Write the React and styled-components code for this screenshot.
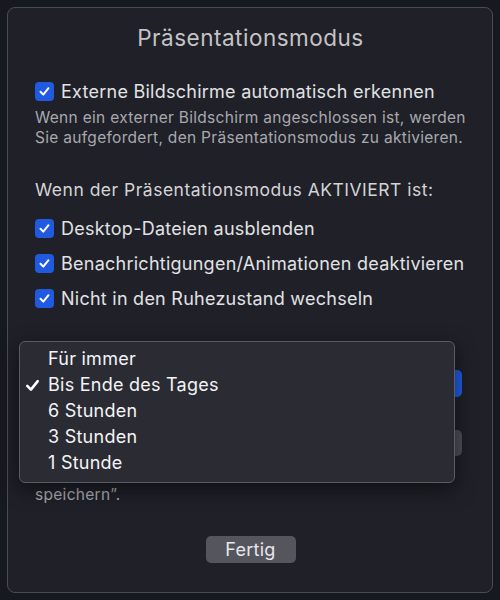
import React from 'react';
import styled, { createGlobalStyle } from 'styled-components';

const GlobalStyle = createGlobalStyle`
	html, body {
		margin: 0;
		padding: 0;
		background: #171920;
	}
	* {
		box-sizing: border-box;
	}
`;

const S = {
	Page: styled.div`
		width: 500px;
		height: 600px;
		padding: 7px;
		background: #171920;
		font-family: Inter, 'Noto Sans', sans-serif;
	`,
	Sheet: styled.div`
		position: relative;
		height: 586px;
		border: 1px solid #4a4c54;
		border-radius: 8px;
		background: #1f2028;
		padding: 17px 26px 0 27px;
		display: flex;
		flex-direction: column;
	`,
	Title: styled.h1`
		margin: 0 0 25px;
		text-align: center;
		font-size: 22.5px;
		line-height: 26px;
		letter-spacing: 0.5px;
		font-weight: 400;
		color: #c4c4c6;
	`,
	Section: styled.div`
		display: flex;
		flex-direction: column;
		margin-bottom: ${(props) => props.gap || 0}px;
	`,
	Row: styled.label`
		display: flex;
		align-items: center;
		gap: 7px;
		height: ${(props) => props.h || 35}px;
		font-size: 18px;
		letter-spacing: 0.25px;
		color: #e2e2e4;
	`,
	Box: styled.span`
		width: 19px;
		height: 19px;
		border-radius: 4px;
		background: #1f5ae0;
		display: flex;
		align-items: center;
		justify-content: center;
		flex-shrink: 0;
	`,
	Note: styled.p`
		margin: ${(props) => props.top || 0}px 0 0;
		font-size: 15.5px;
		line-height: 20px;
		letter-spacing: 0.3px;
		color: #a9a9ad;
		white-space: nowrap;
	`,
	Heading: styled.p`
		margin: 0 0 10px;
		font-size: 17.5px;
		line-height: 22px;
		letter-spacing: 0.5px;
		color: #d4d4d6;
	`,
	Control: styled.div`
		display: flex;
		align-items: center;
		justify-content: flex-end;
		height: ${(props) => props.h}px;
	`,
	Stepper: styled.span`
		width: 16px;
		height: 27px;
		border-radius: 5px;
		background: #1f5ae0;
		margin-right: 4px;
	`,
	GreyButton: styled.span`
		width: 40px;
		height: 26px;
		border-radius: 5px;
		background: #4c4d54;
		margin-right: 4px;
	`,
	Footer: styled.div`
		display: flex;
		justify-content: center;
		margin-top: auto;
		margin-bottom: 29px;
	`,
	Button: styled.button`
		width: 90px;
		height: 27px;
		border: none;
		border-radius: 5px;
		background: #55565d;
		color: #e8e8ea;
		font-family: inherit;
		font-size: 18px;
		letter-spacing: 0.25px;
		padding: 0;
	`,
	Menu: styled.ul`
		position: absolute;
		left: 11px;
		top: 333px;
		width: 436px;
		height: 142px;
		margin: 0;
		padding: 4px 0 0;
		list-style: none;
		border: 1px solid #5a5c63;
		border-radius: 6px;
		background: #2b2c33;
		box-shadow: 0 6px 20px rgba(0, 0, 0, 0.5);
	`,
	Item: styled.li`
		position: relative;
		height: 26px;
		line-height: 26px;
		padding-left: 28px;
		font-size: 18px;
		letter-spacing: 0.25px;
		color: #f4f4f6;
	`,
	Check: styled.span`
		position: absolute;
		left: 4px;
		top: 5px;
		display: flex;
	`
};

const CheckMark = ({ size = 13, weight = 2 }) => (
	<svg width={size} height={size} viewBox="0 0 13 13">
		<path d="M2.5 6.8 L5.3 9.6 L10.5 3.2" fill="none" stroke="#fff" strokeWidth={weight} strokeLinecap="round" strokeLinejoin="round" />
	</svg>
);

const Checkbox = ({ children, h }) => (
	<S.Row h={h}>
		<S.Box>
			<CheckMark />
		</S.Box>
		{children}
	</S.Row>
);

const ACTIVE_ITEMS = [
	'Desktop-Dateien ausblenden',
	'Benachrichtigungen/Animationen deaktivieren',
	'Nicht in den Ruhezustand wechseln'
];

const MENU_ITEMS = [ 'Für immer', 'Bis Ende des Tages', '6 Stunden', '3 Stunden', '1 Stunde' ];

const App = () => (
	<S.Page>
		<GlobalStyle />
		<S.Sheet>
			<S.Title>Präsentationsmodus</S.Title>
			<S.Section gap={31}>
				<Checkbox h={30}>Externe Bildschirme automatisch erkennen</Checkbox>
				<S.Note top={2}>
					Wenn ein externer Bildschirm angeschlossen ist, werden
					<br />
					Sie aufgefordert, den Präsentationsmodus zu aktivieren.
				</S.Note>
			</S.Section>
			<S.Section gap={24}>
				<S.Heading>Wenn der Präsentationsmodus AKTIVIERT ist:</S.Heading>
				{ACTIVE_ITEMS.map((item) => (
					<Checkbox key={item}>{item}</Checkbox>
				))}
			</S.Section>
			<S.Section>
				<S.Control h={86}>
					<S.Stepper />
				</S.Control>
				<S.Control h={34}>
					<S.GreyButton />
				</S.Control>
				<S.Note top={25}>speichern”.</S.Note>
			</S.Section>
			<S.Footer>
				<S.Button>Fertig</S.Button>
			</S.Footer>
			<S.Menu>
				{MENU_ITEMS.map((item) => (
					<S.Item key={item}>
						{item === 'Bis Ende des Tages' && (
							<S.Check>
								<CheckMark size={17} weight={2} />
							</S.Check>
						)}
						{item}
					</S.Item>
				))}
			</S.Menu>
		</S.Sheet>
	</S.Page>
);

export default App;
